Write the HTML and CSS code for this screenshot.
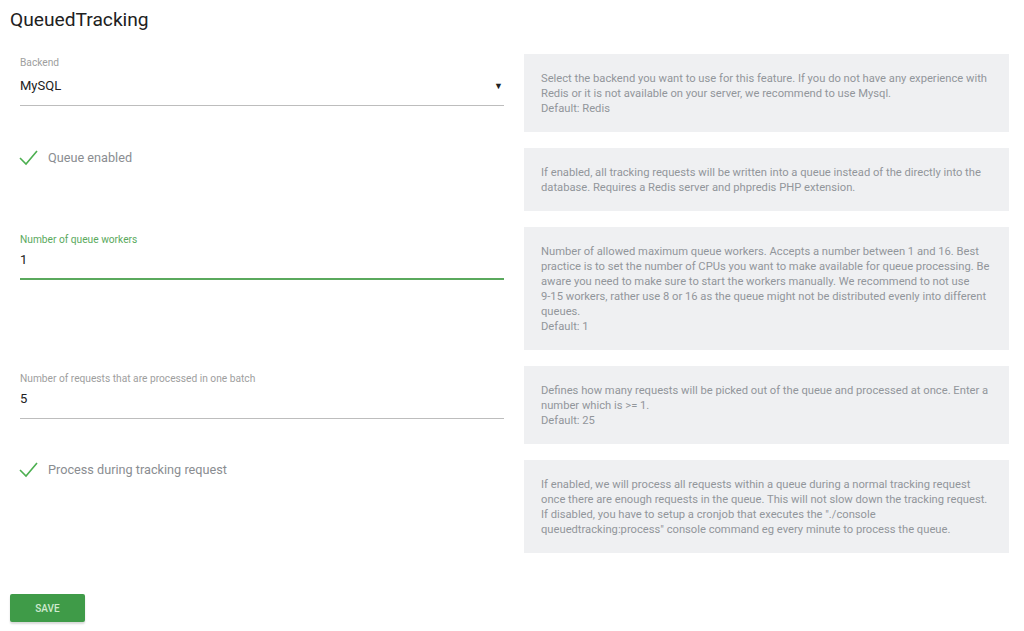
FILE: index.html
```html
<!DOCTYPE html>
<html lang="en">
    <head>
        <title>QueuedTracking</title>
        <link rel="stylesheet" href="styles.css">
    </head>

    <body>
        <h2 class="title">QueuedTracking</h2>

        <div class="settings">
            <div class="setting">
                <div class="field selectField">
                    <label class="fieldLabel">Backend</label>
                    <div class="fieldInput">
                        <span>MySQL</span>
                        <span class="caret">&#9660;</span>
                    </div>
                </div>
                <div class="help">
                    Select the backend you want to use for this feature. If you do not have any experience with Redis or it is not available on your server, we recommend to use Mysql.<br>
                    Default: Redis
                </div>
            </div>

            <div class="setting">
                <div class="field checkField">
                    <svg class="check" width="22" height="18" viewBox="0 0 22 18">
                        <polyline points="2,9 8,15 19,2" fill="none" stroke="#4caf50" stroke-width="1.6"/>
                    </svg>
                    <span class="checkLabel">Queue enabled</span>
                </div>
                <div class="help">
                    If enabled, all tracking requests will be written into a queue instead of the directly into the database. Requires a Redis server and phpredis PHP extension.
                </div>
            </div>

            <div class="setting">
                <div class="field textField active">
                    <label class="fieldLabel">Number of queue workers</label>
                    <div class="fieldInput">1</div>
                </div>
                <div class="help">
                    Number of allowed maximum queue workers. Accepts a number between 1 and 16. Best practice is to set the number of CPUs you want to make available for queue processing. Be aware you need to make sure to start the workers manually. We recommend to not use 9&#8209;15 workers, rather use 8 or 16 as the queue might not be distributed evenly into different queues.<br>
                    Default: 1
                </div>
            </div>

            <div class="setting">
                <div class="field textField">
                    <label class="fieldLabel">Number of requests that are processed in one batch</label>
                    <div class="fieldInput">5</div>
                </div>
                <div class="help">
                    Defines how many requests will be picked out of the queue and processed at once. Enter a number which is &gt;= 1.<br>
                    Default: 25
                </div>
            </div>

            <div class="setting">
                <div class="field checkField">
                    <svg class="check" width="22" height="18" viewBox="0 0 22 18">
                        <polyline points="2,9 8,15 19,2" fill="none" stroke="#4caf50" stroke-width="1.6"/>
                    </svg>
                    <span class="checkLabel">Process during tracking request</span>
                </div>
                <div class="help">
                    If enabled, we will process all requests within a queue during a normal tracking request once there are enough requests in the queue. This will not slow down the tracking request. If disabled, you have to setup a cronjob that executes the "./console queuedtracking:process" console command eg every minute to process the queue.
                </div>
            </div>
        </div>

        <button class="save">SAVE</button>
    </body>
</html>
```

FILE: styles.css
```css
body {
    margin: 0;
    padding: 8px 10px;
    font-family: Roboto, "Liberation Sans", sans-serif;
    background: white;
}

.title {
    margin: 0 0 22px 0;
    font-size: 19.2px;
    line-height: 24px;
    font-weight: 400;
    color: #212121;
}

.settings {
    margin-left: 10px;
    width: 989px;
}

.setting {
    display: flex;
    gap: 20px;
    margin-bottom: 16px;
}

.field {
    width: 484px;
    flex-shrink: 0;
}

.fieldLabel {
    display: block;
    font-size: 10.2px;
    line-height: 13px;
    color: #9e9e9e;
}

.fieldInput {
    display: flex;
    justify-content: space-between;
    font-size: 13px;
    line-height: 20px;
    color: #212121;
    border-bottom: 1px solid #bdbdbd;
}

.selectField {
    padding-top: 2px;
}
.selectField .fieldInput {
    padding: 7px 0 9px 0;
}
.caret {
    font-size: 9px;
    color: #222;
    padding-right: 1px;
}

.textField {
    padding-top: 6px;
}
.textField .fieldInput {
    padding: 4px 0 9px 0;
}
.textField.active .fieldLabel {
    color: #5aa95d;
}
.textField.active .fieldInput {
    border-bottom: 2px solid #5aa95d;
    padding-bottom: 8px;
}

.checkField {
    display: flex;
    align-items: center;
    height: 20px;
}
.check {
    margin-left: -2px;
    margin-right: 8px;
}
.checkLabel {
    font-size: 12.7px;
    line-height: 20px;
    color: #8a8d91;
}

.help {
    flex: 1;
    background-color: #eff0f2;
    padding: 16.5px 15px 16.5px 17px;
    font-size: 11.2px;
    line-height: 15px;
    color: #92969b;
}

.save {
    margin-top: 25px;
    width: 75px;
    height: 28px;
    border: none;
    border-radius: 2px;
    background-color: #3f9b48;
    color: #cfe9cf;
    font-family: Roboto, "Liberation Sans", sans-serif;
    font-size: 10px;
    font-weight: 500;
    box-shadow: 0 2px 2px rgba(0, 0, 0, 0.15);
    cursor: pointer;
}
```
